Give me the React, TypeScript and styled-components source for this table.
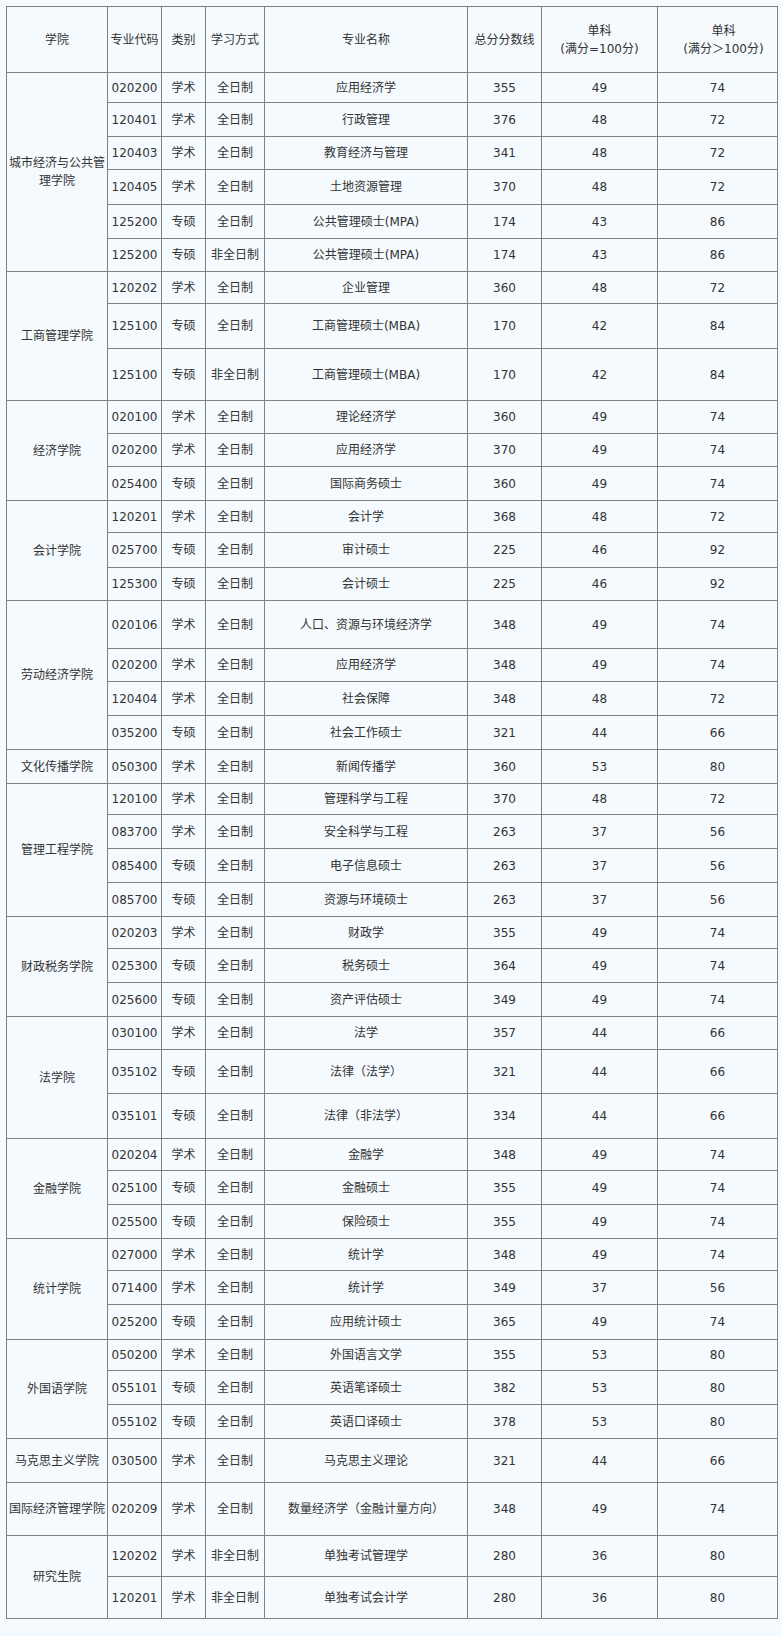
import React from "react";
import styled, { createGlobalStyle } from "styled-components";

const GlobalStyle = createGlobalStyle`
  html, body {
    margin: 0;
    padding: 0;
    background: #f5fafe;
  }
  body {
    font-family: "DejaVu Sans", "Noto Sans CJK SC", sans-serif;
    font-size: 12px;
    color: #333;
  }
`;

const Page = styled.div`
  padding: 6px 5px 18px 6px;
  background: #f5fafe;
`;

const Table = styled.table`
  width: 771px;
  table-layout: fixed;
  border-collapse: collapse;
  border: 1px solid #2f2f2f;
  background: #f5fafe;
`;

const Row = styled.tr<{ $h: number }>`
  height: ${(p) => p.$h}px;
`;

const HeadCell = styled.th<{ $shift?: number }>`
  border: 1px solid #808080;
  font-weight: normal;
  text-align: center;
  vertical-align: middle;
  line-height: 18px;
  padding: 0 2px 0 ${(p) => 2 + (p.$shift ?? 0)}px;
  color: #333;
`;

const Cell = styled.td`
  border: 1px solid #808080;
  text-align: center;
  vertical-align: middle;
  line-height: 18px;
  padding: 0 2px;
  color: #333;
  word-break: break-all;
`;

const CollegeCell = styled(Cell)`
  padding: 0 2px;
`;

type R = [string, string, string, string, string, string, string, number];
type Group = { college: string; rows: R[] };

const groups: Group[] = [
  {
    college: "城市经济与公共管理学院",
    rows: [
      ["020200", "学术", "全日制", "应用经济学", "355", "49", "74", 30],
      ["120401", "学术", "全日制", "行政管理", "376", "48", "72", 34],
      ["120403", "学术", "全日制", "教育经济与管理", "341", "48", "72", 33],
      ["120405", "学术", "全日制", "土地资源管理", "370", "48", "72", 35],
      ["125200", "专硕", "全日制", "公共管理硕士(MPA)", "174", "43", "86", 34],
      ["125200", "专硕", "非全日制", "公共管理硕士(MPA)", "174", "43", "86", 33],
    ],
  },
  {
    college: "工商管理学院",
    rows: [
      ["120202", "学术", "全日制", "企业管理", "360", "48", "72", 32],
      ["125100", "专硕", "全日制", "工商管理硕士(MBA)", "170", "42", "84", 45],
      ["125100", "专硕", "非全日制", "工商管理硕士(MBA)", "170", "42", "84", 52],
    ],
  },
  {
    college: "经济学院",
    rows: [
      ["020100", "学术", "全日制", "理论经济学", "360", "49", "74", 33],
      ["020200", "学术", "全日制", "应用经济学", "370", "49", "74", 33],
      ["025400", "专硕", "全日制", "国际商务硕士", "360", "49", "74", 34],
    ],
  },
  {
    college: "会计学院",
    rows: [
      ["120201", "学术", "全日制", "会计学", "368", "48", "72", 32],
      ["025700", "专硕", "全日制", "审计硕士", "225", "46", "92", 35],
      ["125300", "专硕", "全日制", "会计硕士", "225", "46", "92", 33],
    ],
  },
  {
    college: "劳动经济学院",
    rows: [
      ["020106", "学术", "全日制", "人口、资源与环境经济学", "348", "49", "74", 48],
      ["020200", "学术", "全日制", "应用经济学", "348", "49", "74", 33],
      ["120404", "学术", "全日制", "社会保障", "348", "48", "72", 34],
      ["035200", "专硕", "全日制", "社会工作硕士", "321", "44", "66", 34],
    ],
  },
  {
    college: "文化传播学院",
    rows: [["050300", "学术", "全日制", "新闻传播学", "360", "53", "80", 34]],
  },
  {
    college: "管理工程学院",
    rows: [
      ["120100", "学术", "全日制", "管理科学与工程", "370", "48", "72", 31],
      ["083700", "学术", "全日制", "安全科学与工程", "263", "37", "56", 34],
      ["085400", "专硕", "全日制", "电子信息硕士", "263", "37", "56", 34],
      ["085700", "专硕", "全日制", "资源与环境硕士", "263", "37", "56", 34],
    ],
  },
  {
    college: "财政税务学院",
    rows: [
      ["020203", "学术", "全日制", "财政学", "355", "49", "74", 32],
      ["025300", "专硕", "全日制", "税务硕士", "364", "49", "74", 34],
      ["025600", "专硕", "全日制", "资产评估硕士", "349", "49", "74", 34],
    ],
  },
  {
    college: "法学院",
    rows: [
      ["030100", "学术", "全日制", "法学", "357", "44", "66", 33],
      ["035102", "专硕", "全日制", "法律（法学）", "321", "44", "66", 44],
      ["035101", "专硕", "全日制", "法律（非法学）", "334", "44", "66", 45],
    ],
  },
  {
    college: "金融学院",
    rows: [
      ["020204", "学术", "全日制", "金融学", "348", "49", "74", 32],
      ["025100", "专硕", "全日制", "金融硕士", "355", "49", "74", 34],
      ["025500", "专硕", "全日制", "保险硕士", "355", "49", "74", 34],
    ],
  },
  {
    college: "统计学院",
    rows: [
      ["027000", "学术", "全日制", "统计学", "348", "49", "74", 32],
      ["071400", "学术", "全日制", "统计学", "349", "37", "56", 34],
      ["025200", "专硕", "全日制", "应用统计硕士", "365", "49", "74", 35],
    ],
  },
  {
    college: "外国语学院",
    rows: [
      ["050200", "学术", "全日制", "外国语言文学", "355", "53", "80", 31],
      ["055101", "专硕", "全日制", "英语笔译硕士", "382", "53", "80", 34],
      ["055102", "专硕", "全日制", "英语口译硕士", "378", "53", "80", 34],
    ],
  },
  {
    college: "马克思主义学院",
    rows: [["030500", "学术", "全日制", "马克思主义理论", "321", "44", "66", 44]],
  },
  {
    college: "国际经济管理学院",
    rows: [["020209", "学术", "全日制", "数量经济学（金融计量方向）", "348", "49", "74", 53]],
  },
  {
    college: "研究生院",
    rows: [
      ["120202", "学术", "非全日制", "单独考试管理学", "280", "36", "80", 41],
      ["120201", "学术", "非全日制", "单独考试会计学", "280", "36", "80", 42],
    ],
  },
];

const widths = [101, 54, 44, 59, 203, 74, 116, 120];

export default function App() {
  return (
    <>
      <GlobalStyle />
      <Page>
        <Table>
          <colgroup>
            {widths.map((w, i) => (
              <col key={i} style={{ width: w }} />
            ))}
          </colgroup>
          <thead>
            <Row $h={66}>
              <HeadCell>学院</HeadCell>
              <HeadCell>专业代码</HeadCell>
              <HeadCell>类别</HeadCell>
              <HeadCell>学习方式</HeadCell>
              <HeadCell>专业名称</HeadCell>
              <HeadCell>总分分数线</HeadCell>
              <HeadCell>
                单科
                <br />
                (满分=100分)
              </HeadCell>
              <HeadCell $shift={12}>
                单科
                <br />
                (满分＞100分)
              </HeadCell>
            </Row>
          </thead>
          <tbody>
            {groups.map((g) =>
              g.rows.map((r, i) => (
                <Row key={g.college + i} $h={r[7]}>
                  {i === 0 && (
                    <CollegeCell rowSpan={g.rows.length}>{g.college}</CollegeCell>
                  )}
                  <Cell>{r[0]}</Cell>
                  <Cell>{r[1]}</Cell>
                  <Cell>{r[2]}</Cell>
                  <Cell>{r[3]}</Cell>
                  <Cell>{r[4]}</Cell>
                  <Cell>{r[5]}</Cell>
                  <Cell>{r[6]}</Cell>
                </Row>
              ))
            )}
          </tbody>
        </Table>
      </Page>
    </>
  );
}
